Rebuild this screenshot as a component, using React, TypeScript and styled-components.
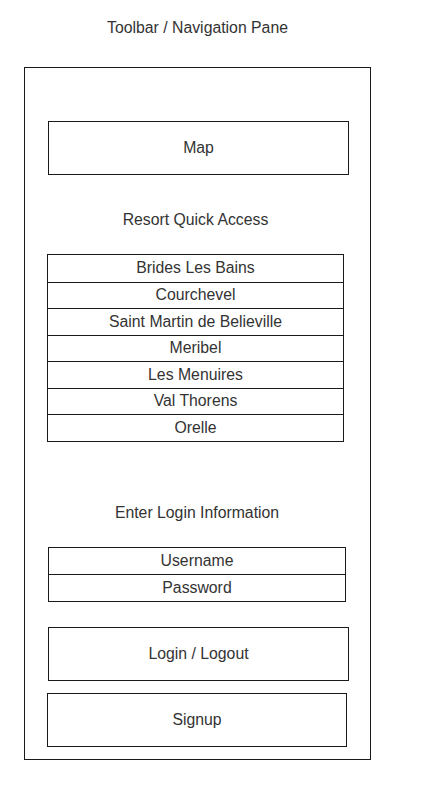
import React from "react";
import styled, { createGlobalStyle } from "styled-components";

const GlobalStyle = createGlobalStyle`
  html, body {
    margin: 0;
    padding: 0;
    background: #ffffff;
  }
  body {
    font-family: "Liberation Sans", Arial, sans-serif;
    color: #333333;
  }
  * {
    box-sizing: border-box;
  }
`;

const resorts = [
  "Brides Les Bains",
  "Courchevel",
  "Saint Martin de Believille",
  "Meribel",
  "Les Menuires",
  "Val Thorens",
  "Orelle",
];

const Page = styled.div`
  width: 430px;
  height: 808px;
  padding: 17.5px 0 0 24px;
  font-size: 15.8px;
`;

const Title = styled.div`
  width: 347px;
  line-height: 20px;
  text-align: center;
`;

const Frame = styled.div`
  margin-top: 29.5px;
  width: 347px;
  height: 693px;
  border: 1px solid #1a1a1a;
  display: flex;
  flex-direction: column;
`;

const Box = styled.div<{ $left: number; $width: number; $top: number }>`
  margin-left: ${(p) => p.$left}px;
  margin-top: ${(p) => p.$top}px;
  width: ${(p) => p.$width}px;
  height: 54px;
  border: 1px solid #1a1a1a;
  display: flex;
  align-items: center;
  justify-content: center;
`;

const Heading = styled.div<{ $left: number; $width: number; $top: number }>`
  margin-left: ${(p) => p.$left}px;
  margin-top: ${(p) => p.$top}px;
  width: ${(p) => p.$width}px;
  line-height: 20px;
  text-align: center;
`;

const List = styled.div<{ $left: number; $width: number; $top: number }>`
  margin-left: ${(p) => p.$left}px;
  margin-top: ${(p) => p.$top}px;
  width: ${(p) => p.$width}px;
  border: 1px solid #1a1a1a;
  display: flex;
  flex-direction: column;
`;

const Row = styled.div`
  height: 26.5px;
  display: flex;
  align-items: center;
  justify-content: center;
  & + & {
    border-top: 1px solid #1a1a1a;
  }
`;

export default function App() {
  return (
    <>
      <GlobalStyle />
      <Page>
        <Title>Toolbar / Navigation Pane</Title>
        <Frame>
          <Box $left={23} $width={301} $top={53}>
            Map
          </Box>
          <Heading $left={22} $width={297} $top={35}>
            Resort Quick Access
          </Heading>
          <List $left={22} $width={297} $top={24}>
            {resorts.map((r) => (
              <Row key={r}>{r}</Row>
            ))}
          </List>
          <Heading $left={23} $width={298} $top={61.5}>
            Enter Login Information
          </Heading>
          <List $left={23} $width={298} $top={23.5}>
            <Row>Username</Row>
            <Row>Password</Row>
          </List>
          <Box $left={23} $width={301} $top={25.5}>
            Login / Logout
          </Box>
          <Box $left={22} $width={300} $top={12}>
            Signup
          </Box>
        </Frame>
      </Page>
    </>
  );
}
